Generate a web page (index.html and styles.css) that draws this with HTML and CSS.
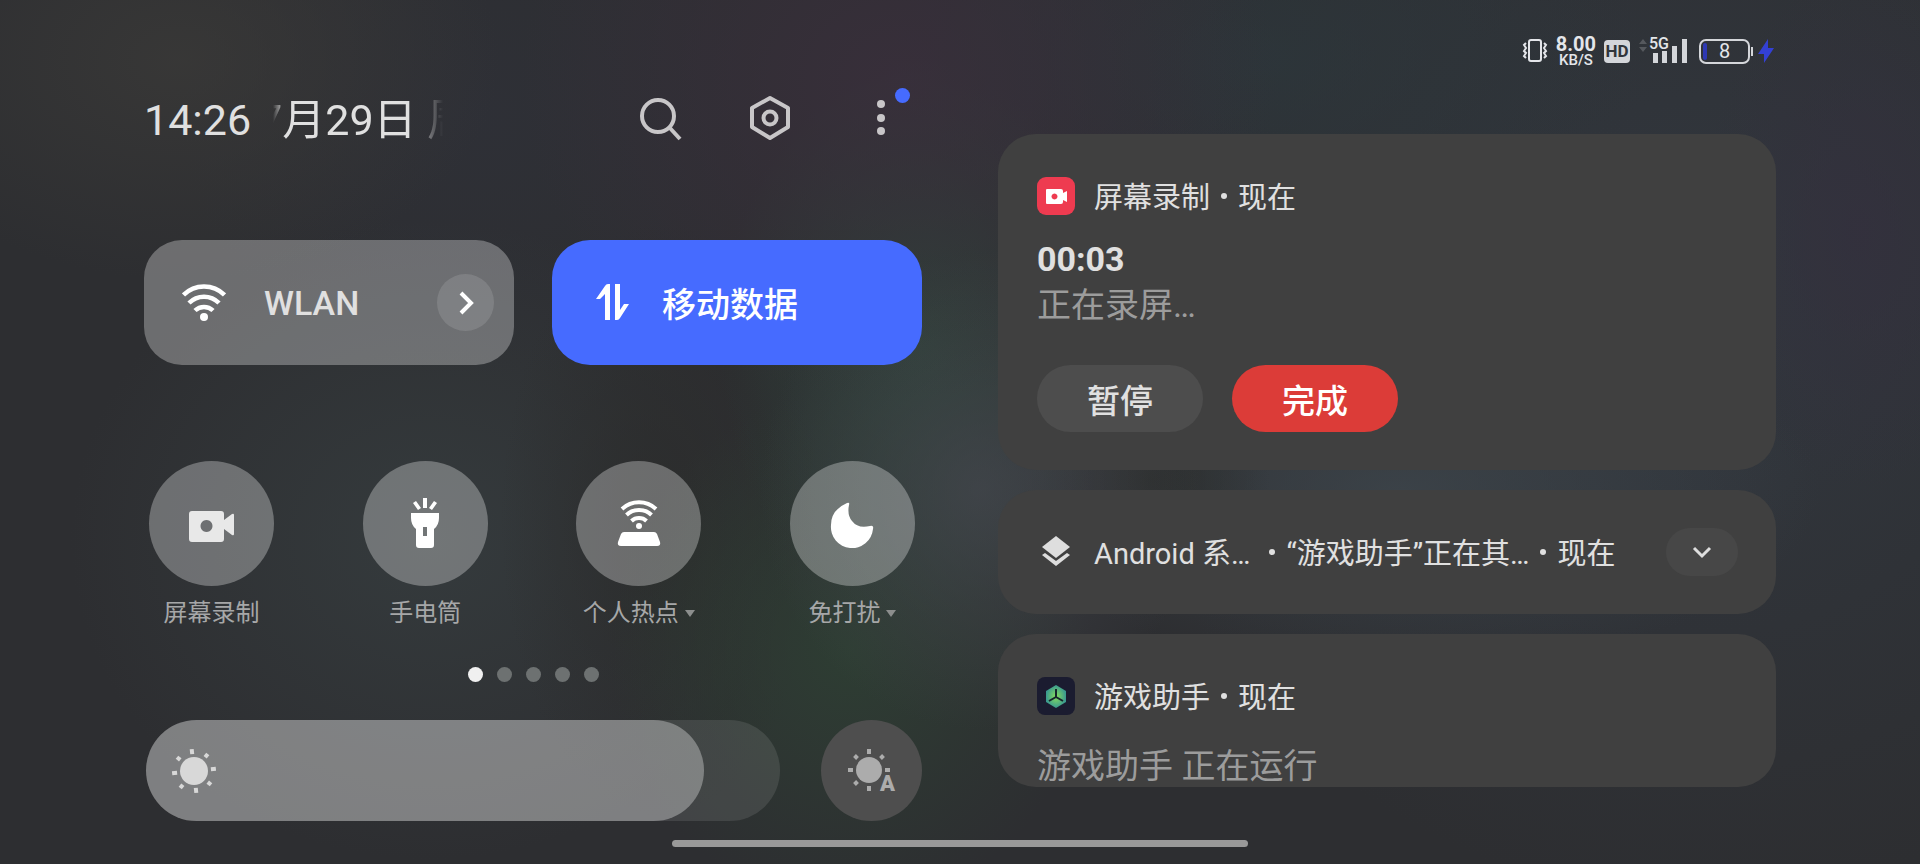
FILE: index.html
```
<!DOCTYPE html>
<html lang="zh-CN">
<head>
    <meta charset="utf-8" />
    <meta name="viewport" content="width=device-width, initial-scale=1" />
    <title>控制中心</title>
    <link rel="stylesheet" href="styles.css">
</head>
<body>
    <main class="shade">
        <section class="controls">
            <header class="topbar">
                <time class="clock">14:26</time>
                <div class="date"><span class="date-text">7月29日 周五</span></div>
                <div class="actions">
                    <button class="icon-button" aria-label="搜索">
                        <svg viewBox="0 0 56 56" fill="none" stroke="#c8c6c8" stroke-width="4">
                            <circle cx="27" cy="26" r="16" />
                            <path d="M38 37l11 12" />
                        </svg>
                    </button>
                    <button class="icon-button" aria-label="设置">
                        <svg viewBox="0 0 56 56" fill="none" stroke="#c8c6c8" stroke-width="4" stroke-linejoin="round">
                            <path d="M28 8l18 10v19L28 48 10 37V18z" />
                            <circle cx="28" cy="28" r="6.500" />
                        </svg>
                    </button>
                    <button class="icon-button" aria-label="更多">
                        <svg viewBox="0 0 56 56" fill="#c8c6c8">
                            <circle cx="28" cy="14" r="4" />
                            <circle cx="28" cy="28" r="4" />
                            <circle cx="28" cy="41" r="4" />
                        </svg>
                        <span class="badge"></span>
                    </button>
                </div>
            </header>

            <div class="tiles">
                <div class="tile tile-wlan">
                    <svg class="tile-icon" viewBox="0 0 44 44" fill="none" stroke="#fff" stroke-width="4.500">
                        <path d="M1.500 14a29 29 0 0 1 41 0" />
                        <path d="M7 22a21 21 0 0 1 30 0" />
                        <path d="M13 29.500a13 13 0 0 1 18 0" />
                        <circle cx="22" cy="36" r="4" fill="#fff" stroke="none" />
                    </svg>
                    <span class="tile-label">WLAN</span>
                    <button class="tile-more" aria-label="WLAN 详情">
                        <svg viewBox="0 0 24 24" fill="none" stroke="#fff" stroke-width="4">
                            <path d="M7 2l10 10L7 22" />
                        </svg>
                    </button>
                </div>
                <button class="tile tile-on">
                    <svg class="tile-icon" viewBox="0 0 44 44" fill="#fff">
                        <path d="M20 39h-5V13l-5 5H6L15 5q1-2 3-2h2z" />
                        <path d="M25 3h5v26l4-6h5L30 37q-1 2-3 2h-2z" />
                    </svg>
                    <span class="tile-label">移动数据</span>
                </button>
            </div>

            <div class="toggles">
                <button class="toggle">
                    <span class="toggle-disc">
                        <svg viewBox="0 0 60 60" fill="#e8e8e8">
                            <path fill-rule="evenodd" d="M10 17h29a3 3 0 0 1 3 3v6l8-6q2-1 2 1v19q0 2-2 1l-8-6v10a3 3 0 0 1-3 3H10a3 3 0 0 1-3-3V20a3 3 0 0 1 3-3zM24.500 26a6 6 0 1 0 .01 0z" />
                        </svg>
                    </span>
                    <span class="toggle-label">屏幕录制</span>
                </button>
                <button class="toggle">
                    <span class="toggle-disc">
                        <svg viewBox="0 0 60 60" fill="#fff">
                            <path d="M28 4h4v10h-4zM18 9l3-2 5 7-3 2zM42 9l-3-2-5 7 3 2z" />
                            <path fill-rule="evenodd" d="M16 19h28v5q0 7-5 11v16q0 3-3 3H24q-3 0-3-3V35q-5-4-5-11zM28 33v9h4v-9z" />
                        </svg>
                    </span>
                    <span class="toggle-label">手电筒</span>
                </button>
                <button class="toggle">
                    <span class="toggle-disc">
                        <svg viewBox="0 0 60 60" fill="none" stroke="#fff" stroke-width="4">
                            <path d="M13 15a25 25 0 0 1 34 0" />
                            <path d="M17.500 21a18 18 0 0 1 25 0" />
                            <path d="M22.500 27a11 11 0 0 1 15 0" />
                            <circle cx="30" cy="32" r="3" fill="#fff" stroke="none" />
                            <path stroke="none" fill="#fff" d="M15 38h30q2 0 3 2l3 8q1 4-3 4H12q-4 0-3-4l3-8q1-2 3-2z" />
                        </svg>
                    </span>
                    <span class="toggle-label">个人热点<i class="caret"></i></span>
                </button>
                <button class="toggle">
                    <span class="toggle-disc">
                        <svg viewBox="0 0 60 60" fill="#fff">
                            <path d="M25 9q3-1 2 2-2 10 3 16 6 8 18 5 4-1 3 3a21 21 0 0 1-42-4q0-15 16-22z" />
                        </svg>
                    </span>
                    <span class="toggle-label">免打扰<i class="caret"></i></span>
                </button>
            </div>

            <div class="pages">
                <span class="page active"></span>
                <span class="page"></span>
                <span class="page"></span>
                <span class="page"></span>
                <span class="page"></span>
            </div>

            <div class="brightness">
                <div class="slider">
                    <div class="slider-fill" style="width: 88%">
                        <svg class="slider-icon" viewBox="0 0 50 50" fill="#d8d8d8">
                            <circle cx="25" cy="25" r="14" />
                            <path stroke="#d8d8d8" stroke-width="4" transform="rotate(-6 25 25)" d="M25 3v5M25 42v5M3 25h5M42 25h5M9.500 9.500l3 3M37.500 37.500l3 3M9.500 40.500l3-3M37.500 12.500l3-3" />
                        </svg>
                    </div>
                    <input class="slider-input" type="range" min="0" max="100" value="88" aria-label="亮度">
                </div>
                <button class="auto" aria-label="自动亮度">
                    <svg viewBox="0 0 50 50" fill="#acacac">
                        <circle cx="22" cy="24" r="13" />
                        <path stroke="#acacac" stroke-width="4" d="M22 3v5M22 40v5M1 24h5M38 24h5M7.500 9.500l3 3M7.500 38.500l3-3M33.500 12.500l3-3" />
                    </svg>
                    <span class="auto-mark">A</span>
                </button>
            </div>
        </section>

        <section class="panel">
            <div class="status">
                <svg class="status-vibrate" viewBox="0 0 26 26" fill="none" stroke="#e4e6ea" stroke-width="2">
                    <rect x="7" y="2" width="12" height="21" rx="2" />
                    <path d="M4 5L2 7l2 3-2 3 2 2-2 3 2 2M22 5l2 2-2 3 2 3-2 2 2 3-2 2" />
                </svg>
                <div class="speed">
                    <span class="speed-value">8.00</span>
                    <span class="speed-unit">KB/S</span>
                </div>
                <span class="hd">HD</span>
                <div class="signal">
                    <svg viewBox="0 0 50 30">
                        <path fill="#55585d" d="M1 8l4-5 4 5zM1 11h8l-4 5z" />
                        <path fill="#d4d6da" d="M15 17h5v10h-5zM24 15h5v12h-5zM34 10h5v17h-5zM44 3h5v24h-5z" />
                    </svg>
                    <span class="signal-type">5G</span>
                </div>
                <div class="power">
                    <span class="battery">8</span>
                    <svg class="bolt" viewBox="0 0 16 26" fill="#3340d4">
                        <path d="M10 1v9h6L6 25v-9H0z" />
                    </svg>
                </div>
            </div>

            <article class="card">
                <div class="card-head">
                    <svg class="app-icon" viewBox="0 0 38 38">
                        <rect width="38" height="38" rx="9" fill="#ee3b50" />
                        <path fill="#fff" fill-rule="evenodd" d="M10 12h14q2 0 2 2v2l4-2v11l-4-2v2q0 2-2 2H10q-1 0-1-1V13q0-1 1-1zM17.500 16.500a3 3 0 1 0 .01 0z" />
                    </svg>
                    <span>屏幕录制</span><i class="dot"></i><span>现在</span>
                </div>
                <h2 class="card-title">00:03</h2>
                <p class="card-text">正在录屏…</p>
                <div class="card-actions">
                    <button class="pill">暂停</button>
                    <button class="pill pill-red">完成</button>
                </div>
            </article>

            <article class="card card-collapsed">
                <div class="card-head">
                    <svg class="app-icon" viewBox="0 0 38 38" fill="#dedede">
                        <path d="M19 3l14 11-14 11L5 14z" />
                        <path d="M5 22l3-2 11 8 11-8 3 2-14 11z" />
                    </svg>
                    <span>Android 系…</span><i class="dot dot-wide"></i><span>“游戏助手”正在其…</span><i class="dot"></i><span>现在</span>
                </div>
                <button class="expand" aria-label="展开">
                    <svg viewBox="0 0 24 24" fill="none" stroke="#dedede" stroke-width="3">
                        <path d="M4 8l8 8 8-8" />
                    </svg>
                </button>
            </article>

            <article class="card card-last">
                <div class="card-head">
                    <svg class="app-icon" viewBox="0 0 38 38">
                        <defs>
                            <radialGradient id="cube">
                                <stop offset="0" stop-color="#86de5c" />
                                <stop offset="1" stop-color="#3a9a90" />
                            </radialGradient>
                        </defs>
                        <rect width="38" height="38" rx="8" fill="#1b1c30" />
                        <path fill="url(#cube)" d="M19 8l10 6v11l-10 6-10-6V14z" />
                        <path fill="none" stroke="#16252c" stroke-width="2" d="M19 12v8M19 20l-7 4M19 20l7 4" />
                    </svg>
                    <span>游戏助手</span><i class="dot"></i><span>现在</span>
                </div>
                <p class="card-text">游戏助手 正在运行</p>
            </article>
        </section>
    </main>
    <div class="home-bar"></div>
</body>
</html>
```
FILE: styles.css
```
* {
    box-sizing: border-box;
}

body {
    margin: 0;
    min-height: 100vh;
    font-family: Roboto, "Noto Sans CJK SC", sans-serif;
    color: #e0e0e0;
    background-color: #2d2e31;
    background-image:
        radial-gradient(ellipse 320px 220px at 180px 60px, rgba(60, 59, 57, 0.7), transparent),
        radial-gradient(ellipse 380px 320px at 900px 80px, rgba(60, 47, 62, 0.7), transparent),
        radial-gradient(ellipse 300px 260px at 480px 120px, rgba(47, 49, 58, 0.6), transparent),
        radial-gradient(ellipse 220px 240px at 980px 490px, rgba(70, 72, 80, 0.7), transparent),
        radial-gradient(ellipse 200px 280px at 920px 340px, rgba(46, 74, 60, 0.7), transparent),
        radial-gradient(ellipse 240px 260px at 850px 650px, rgba(46, 68, 52, 0.7), transparent),
        radial-gradient(ellipse 160px 300px at 660px 520px, rgba(42, 42, 41, 0.7), transparent),
        radial-gradient(ellipse 360px 320px at 430px 540px, rgba(56, 64, 66, 0.7), transparent),
        radial-gradient(ellipse 120px 140px at 1150px 480px, rgba(42, 44, 42, 0.8), transparent),
        radial-gradient(ellipse 420px 180px at 1400px 490px, rgba(62, 70, 76, 0.8), transparent),
        radial-gradient(ellipse 380px 200px at 1270px 60px, rgba(44, 55, 60, 0.7), transparent),
        radial-gradient(ellipse 160px 260px at 1860px 230px, rgba(52, 47, 62, 0.7), transparent),
        radial-gradient(ellipse 600px 600px at 1700px 300px, rgba(50, 56, 64, 0.9), transparent);
}

h2,
p {
    margin: 0;
}

button {
    margin: 0;
    padding: 0;
    border: none;
    background: none;
    font: inherit;
    color: inherit;
    cursor: pointer;
}

svg {
    display: block;
}

.shade {
    display: grid;
    grid-template-columns: 1fr 1fr;
    gap: 76px;
    padding: 0 144px;
}

/* Header */
.topbar {
    display: flex;
    align-items: center;
    margin-top: 90px;
    height: 56px;
    font-size: 43px;
    line-height: 60px;
}

.clock,
.date {
    padding-top: 4px;
}

.date {
    width: 170px;
    margin-left: 22px;
    overflow: hidden;
    white-space: nowrap;
    -webkit-mask-image: linear-gradient(to right, transparent, #000 12px, #000 136px, transparent);
    mask-image: linear-gradient(to right, transparent, #000 12px, #000 136px, transparent);
}

.date-text {
    margin-left: -15px;
}

.actions {
    display: flex;
    gap: 55px;
    margin-left: auto;
    margin-right: 13px;
}

.icon-button {
    position: relative;
    width: 56px;
    height: 56px;
}

.badge {
    position: absolute;
    top: -2px;
    right: -1px;
    width: 15px;
    height: 15px;
    border-radius: 50%;
    background-color: #466bff;
}

/* Large tiles */
.tiles {
    display: grid;
    grid-template-columns: 1fr 1fr;
    gap: 38px;
    margin-top: 94px;
}

.tile {
    display: flex;
    align-items: center;
    gap: 28px;
    height: 125px;
    padding: 0 20px 0 38px;
    border-radius: 38px;
    background-color: rgba(255, 255, 255, 0.3);
    font-size: 34px;
    font-weight: 500;
}

.tile-wlan {
    gap: 38px;
}

.tile-on {
    background-color: #466bff;
    color: #fff;
}

.tile-icon {
    width: 44px;
    height: 44px;
}

.tile-more {
    display: flex;
    align-items: center;
    justify-content: center;
    width: 57px;
    height: 57px;
    margin-left: auto;
    border-radius: 50%;
    background-color: rgba(255, 255, 255, 0.12);
}

.tile-more svg {
    width: 24px;
    height: 24px;
}

/* Round toggles */
.toggles {
    display: flex;
    justify-content: space-between;
    margin-top: 96px;
    padding: 0 7px 0 5px;
}

.toggle {
    display: flex;
    flex-direction: column;
    align-items: center;
    gap: 13px;
    width: 125px;
}

.toggle-disc {
    display: flex;
    align-items: center;
    justify-content: center;
    width: 125px;
    height: 125px;
    border-radius: 50%;
    background-color: rgba(255, 255, 255, 0.3);
}

.toggle-disc svg {
    width: 60px;
    height: 60px;
}

.toggle-label {
    display: flex;
    align-items: center;
    gap: 6px;
    font-size: 24px;
    line-height: 28px;
    white-space: nowrap;
    color: #a6a7a8;
}

.caret {
    border: 5px solid transparent;
    border-top: 7px solid #8c8e8d;
    border-bottom: none;
}

.pages {
    display: flex;
    justify-content: center;
    gap: 14px;
    margin-top: 40px;
}

.page {
    width: 15px;
    height: 15px;
    border-radius: 50%;
    background-color: #6d7171;
}

.page.active {
    background-color: #f0f0f0;
}

/* Brightness */
.brightness {
    display: flex;
    gap: 41px;
    margin-top: 38px;
    padding-left: 2px;
}

.slider {
    position: relative;
    flex: 1;
    height: 101px;
    border-radius: 51px;
    background-color: rgba(255, 255, 255, 0.1);
}

.slider-fill {
    display: flex;
    align-items: center;
    height: 100%;
    padding-left: 23px;
    border-radius: 51px;
    background-color: rgba(255, 255, 255, 0.32);
}

.slider-icon {
    width: 50px;
    height: 50px;
}

.slider-input {
    position: absolute;
    inset: 0;
    width: 100%;
    height: 100%;
    margin: 0;
    appearance: none;
    background: transparent;
}

.slider-input::-webkit-slider-thumb {
    appearance: none;
    width: 50px;
    height: 101px;
    background: transparent;
}

.auto {
    position: relative;
    display: flex;
    align-items: center;
    justify-content: center;
    width: 101px;
    height: 101px;
    border-radius: 50%;
    background-color: #4e4e4e;
}

.auto svg {
    width: 50px;
    height: 50px;
}

.auto-mark {
    position: absolute;
    right: 27px;
    bottom: 26px;
    font-size: 22px;
    font-weight: 900;
    line-height: 22px;
    color: #acacac;
}

/* Status bar */
.status {
    display: flex;
    align-items: center;
    justify-content: flex-end;
    gap: 8px;
    height: 30px;
    margin-top: 36px;
    margin-bottom: 68px;
    padding-right: 2px;
    color: #e4e6ea;
}

.status-vibrate {
    width: 26px;
    height: 26px;
}

.speed {
    display: flex;
    flex-direction: column;
    align-items: center;
}

.speed-value {
    font-size: 20px;
    font-weight: 700;
    line-height: 18px;
}

.speed-unit {
    font-size: 15px;
    font-weight: 500;
    line-height: 15px;
}

.hd {
    width: 26px;
    border-radius: 4px;
    background-color: #d4d6da;
    color: #31353b;
    font-size: 17px;
    font-weight: 700;
    line-height: 23px;
    text-align: center;
}

.signal {
    position: relative;
    width: 50px;
    height: 30px;
}

.signal-type {
    position: absolute;
    top: 0;
    left: 11px;
    font-size: 16px;
    font-weight: 500;
    line-height: 16px;
}

.power {
    display: flex;
    align-items: center;
    gap: 8px;
    margin-left: 3px;
}

.battery {
    position: relative;
    width: 51px;
    height: 25px;
    border: 2px solid #d4d6da;
    border-radius: 7px;
    font-size: 20px;
    line-height: 21px;
    text-align: center;
}

.battery::before {
    content: "";
    position: absolute;
    top: 2px;
    left: 2px;
    width: 4px;
    height: 17px;
    border-radius: 2px;
    background-color: #2d38b4;
}

.battery::after {
    content: "";
    position: absolute;
    top: 6px;
    right: -5px;
    width: 2px;
    height: 9px;
    background-color: #d4d6da;
}

.bolt {
    width: 16px;
    height: 26px;
}

/* Notifications */
.card {
    padding: 43px 38px 38px 39px;
    border-radius: 38px;
    background-color: #404040;
}

.card + .card {
    margin-top: 20px;
}

.card-head {
    display: flex;
    align-items: center;
    height: 38px;
    font-size: 29px;
    line-height: 38px;
    white-space: nowrap;
}

.card-head span {
    padding-top: 3px;
}

.app-icon {
    width: 38px;
    height: 38px;
    margin-right: 19px;
}

.dot {
    width: 6px;
    height: 6px;
    margin: 0 11px;
    border-radius: 50%;
    background-color: #e0e0e0;
}

.dot-wide {
    margin-left: 19px;
}

.card-title {
    margin-top: 21px;
    font-size: 34px;
    font-weight: 700;
    line-height: 46px;
}

.card-text {
    font-size: 34px;
    line-height: 46px;
    color: #9c9c9c;
}

.card-actions {
    display: flex;
    gap: 29px;
    margin-top: 37px;
}

.pill {
    width: 166px;
    height: 67px;
    border-radius: 34px;
    background-color: #4d4d4d;
    font-size: 33px;
    font-weight: 500;
}

.pill-red {
    background-color: #dc3c38;
    color: #fff;
}

.card-collapsed {
    display: flex;
    align-items: center;
    justify-content: space-between;
    padding: 38px 38px 38px 39px;
}

.expand {
    display: flex;
    align-items: center;
    justify-content: center;
    width: 72px;
    height: 48px;
    border-radius: 24px;
    background-color: #474747;
}

.expand svg {
    width: 24px;
    height: 24px;
}

.card-last {
    padding-bottom: 0;
}

.card-last .card-text {
    margin-top: 30px;
    line-height: 42px;
}

.home-bar {
    width: 30%;
    height: 7px;
    margin: 19px auto 17px;
    border-radius: 4px;
    background-color: #999;
}
```
